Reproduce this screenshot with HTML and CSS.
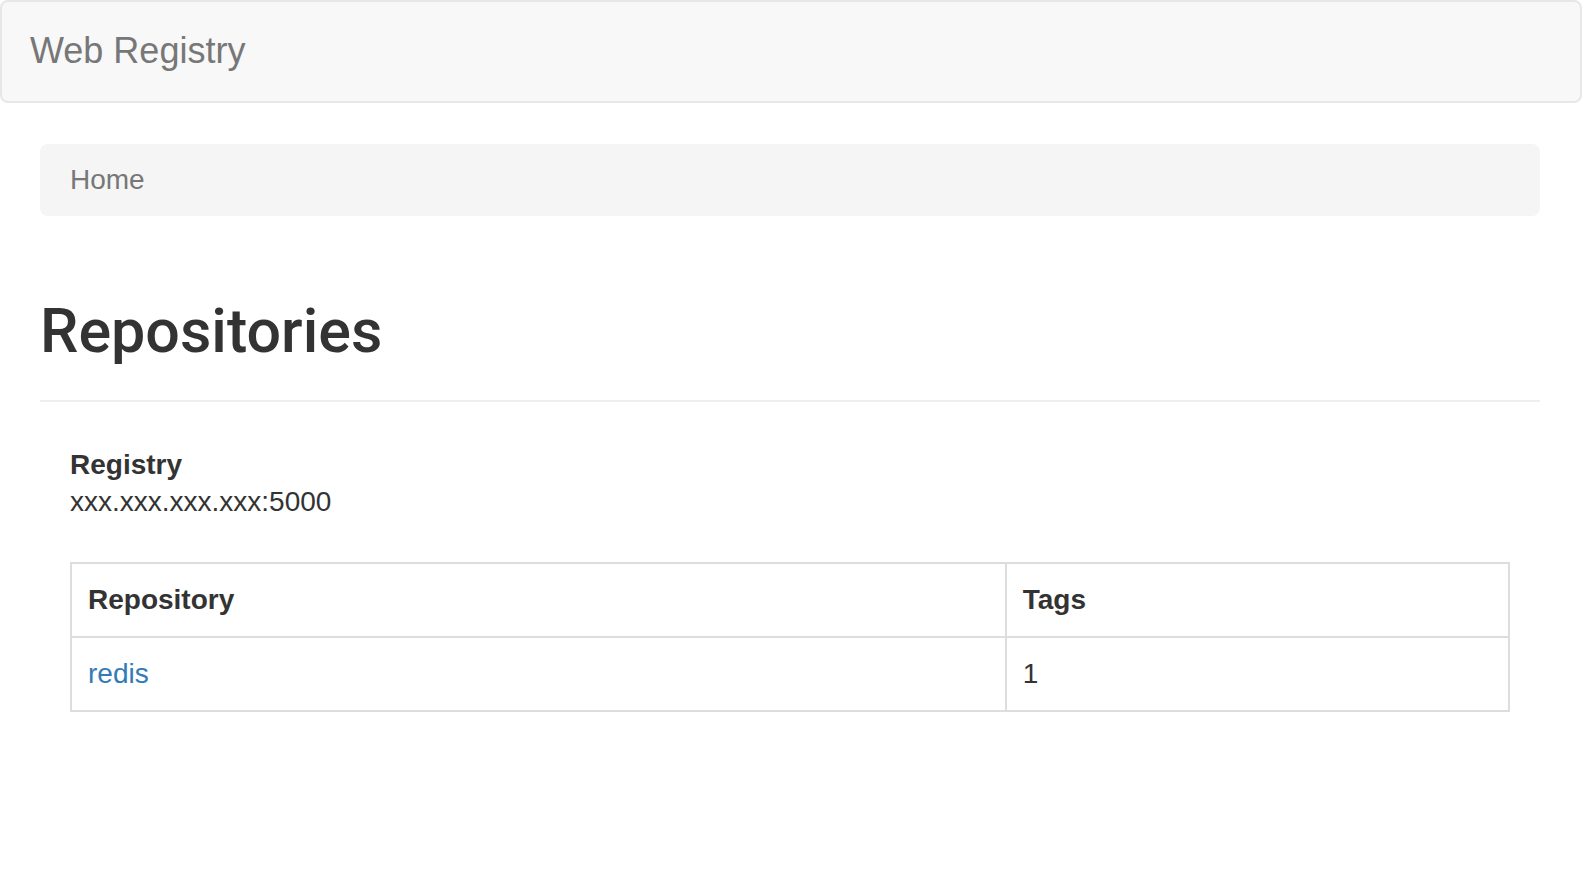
FILE: index.html
```html
<!DOCTYPE html>
<html lang="en">
<head>
<meta charset="utf-8">
<title>Web Registry</title>
<link rel="stylesheet" href="styles.css">
</head>
<body>
<nav class="navbar">
  <a class="brand" href="#">Web Registry</a>
</nav>
<main class="container">
  <ol class="breadcrumb">
    <li class="crumb-active">Home</li>
  </ol>
  <div class="page-header">
    <h1>Repositories</h1>
  </div>
  <section class="content">
    <dl class="registry">
      <dt>Registry</dt>
      <dd>xxx.xxx.xxx.xxx:5000</dd>
    </dl>
    <table class="repo-table">
      <colgroup>
        <col class="col-repo">
        <col class="col-tags">
      </colgroup>
      <thead>
        <tr><th>Repository</th><th>Tags</th></tr>
      </thead>
      <tbody>
        <tr><td><a href="#">redis</a></td><td>1</td></tr>
      </tbody>
    </table>
  </section>
</main>
</body>
</html>
```

FILE: styles.css
```css
* { box-sizing: border-box; }

html, body {
  margin: 0;
  padding: 0;
  background: #fff;
}

body {
  font-family: "Liberation Sans", Arial, Helvetica, sans-serif;
  font-size: 28px;
  line-height: 40px;
  color: #333;
}

a { color: #337ab7; text-decoration: none; }

.navbar {
  background: #f8f8f8;
  border: 2px solid #e7e7e7;
  border-radius: 8px;
  height: 103px;
  padding: 29px 28px 30px;
}

.brand {
  display: block;
  font-size: 36px;
  line-height: 40px;
  color: #777;
}

.container {
  width: 1500px;
  margin: 41px 0 0 40px;
}

.breadcrumb {
  list-style: none;
  margin: 0;
  padding: 16px 30px;
  background: #f5f5f5;
  border-radius: 8px;
  height: 72px;
}

.crumb-active {
  color: #777;
}

.page-header {
  margin-top: 82px;
  padding-bottom: 36px;
  border-bottom: 2px solid #eee;
}

.page-header h1 {
  margin: 0;
  font-family: Roboto, "Liberation Sans", Arial, sans-serif;
  font-size: 61px;
  line-height: 66px;
  font-weight: 500;
  color: #333;
}

.content {
  padding: 44px 30px 0;
}

.registry {
  margin: 0;
  line-height: 37px;
}

.registry dt {
  font-weight: bold;
}

.registry dd {
  margin: 0;
}

.repo-table {
  width: 100%;
  margin-top: 42px;
  border-collapse: collapse;
  border: 2px solid #ddd;
}

.col-repo { width: 65%; }
.col-tags { width: 35%; }

.repo-table th,
.repo-table td {
  border: 2px solid #ddd;
  padding: 16px;
  text-align: left;
  line-height: 40px;
  vertical-align: top;
}

.repo-table th {
  font-weight: bold;
}
```
